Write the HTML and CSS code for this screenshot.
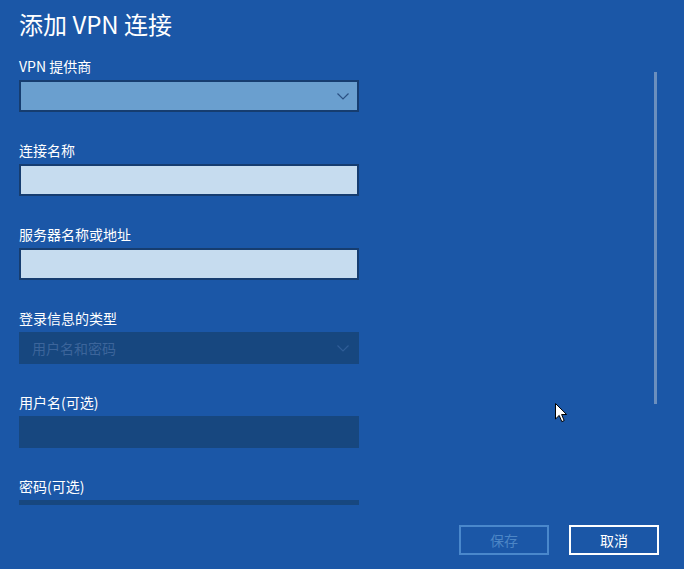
FILE: index.html
```html
<!DOCTYPE html>
<html lang="zh-CN">
<head>
<meta charset="utf-8">
<title>添加 VPN 连接</title>
<link rel="stylesheet" href="styles.css">
</head>
<body>
<div class="page">
  <div class="scroll">
    <h1 class="title">添加 VPN 连接</h1>
    <div class="group">
      <div class="label">VPN 提供商</div>
      <div class="field select">
        <svg class="chev" width="12" height="7" viewBox="0 0 12 7"><path d="M0.5 0.5 L6 6 L11.5 0.5" fill="none" stroke="currentColor" stroke-width="1.2"/></svg>
      </div>
    </div>
    <div class="group">
      <div class="label">连接名称</div>
      <div class="field input"></div>
    </div>
    <div class="group">
      <div class="label">服务器名称或地址</div>
      <div class="field input"></div>
    </div>
    <div class="group">
      <div class="label">登录信息的类型</div>
      <div class="field disabled select-dis">
        <span class="dis-text">用户名和密码</span>
        <svg class="chev" width="12" height="7" viewBox="0 0 12 7"><path d="M0.5 0.5 L6 6 L11.5 0.5" fill="none" stroke="currentColor" stroke-width="1.2"/></svg>
      </div>
    </div>
    <div class="group">
      <div class="label">用户名(可选)</div>
      <div class="field disabled"></div>
    </div>
    <div class="group">
      <div class="label">密码(可选)</div>
      <div class="field disabled"></div>
    </div>
  </div>
  <div class="footer">
    <button class="btn btn-dis">保存</button>
    <button class="btn btn-main">取消</button>
  </div>
  <div class="scrollbar"></div>
  <svg class="cursor" width="13" height="20" viewBox="0 0 13 20"><path d="M0.5 0.5 L0.5 16 L4.2 12.4 L6.8 18.6 L9.2 17.6 L6.6 11.5 L11.6 11.5 Z" fill="#fff" stroke="#000" stroke-width="1" stroke-linejoin="miter"/></svg>
</div>
</body>
</html>
```
FILE: styles.css
```css
* { box-sizing: border-box; }
html, body { margin: 0; padding: 0; }
body {
  background: #1b57a7;
  font-family: "Noto Sans CJK SC", "Noto Sans", sans-serif;
  color: #fff;
  width: 684px;
  height: 569px;
  overflow: hidden;
}
.page {
  position: relative;
  width: 684px;
  height: 569px;
  display: flex;
  flex-direction: column;
}
.scroll {
  height: 505px;
  overflow: hidden;
  padding-left: 19px;
  padding-top: 8px;
}
.title {
  margin: 0 0 16px 0;
  font-size: 24px;
  font-weight: 400;
  line-height: 32px;
  height: 32px;
}
.group {
  margin-bottom: 28px;
}
.label {
  font-size: 14px;
  line-height: 20px;
  height: 20px;
  margin-bottom: 4px;
}
.field {
  width: 340px;
  height: 32px;
  position: relative;
  display: flex;
  align-items: center;
}
.select {
  background: #6a9fcf;
  border: 2px solid #163d70;
  color: #2b5183;
  justify-content: flex-end;
  padding-right: 8px;
}
.input {
  background: #c6dcef;
  border: 2px solid #163d70;
}
.disabled {
  background: #17477f;
}
.select-dis {
  justify-content: space-between;
  padding-left: 13px;
  padding-right: 10px;
  color: #2f5d97;
}
.dis-text {
  font-size: 14px;
  color: #3c659b;
  line-height: 20px;
}
.chev { display: block; }
.footer {
  flex: 1;
  display: flex;
  justify-content: flex-end;
  align-items: flex-start;
  gap: 20px;
  padding-top: 20px;
  padding-right: 25px;
}
.btn {
  width: 90px;
  height: 30px;
  background: transparent;
  font-family: "Noto Sans CJK SC", "Noto Sans", sans-serif;
  font-size: 14px;
  line-height: 20px;
  padding: 0;
}
.btn-dis {
  border: 2px solid #4a88cc;
  color: #4c86c6;
}
.btn-main {
  border: 2px solid #ffffff;
  color: #ffffff;
}
.scrollbar {
  position: absolute;
  left: 654px;
  top: 72px;
  width: 3px;
  height: 332px;
  background: #6b8fbe;
}
.cursor {
  position: absolute;
  left: 555px;
  top: 403px;
}
```
